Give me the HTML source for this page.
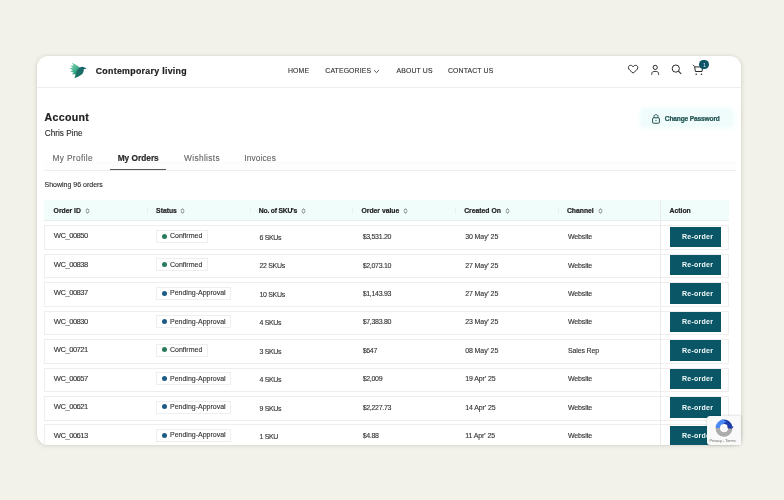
<!DOCTYPE html>
<html><head><meta charset="utf-8">
<style>
*{box-sizing:border-box;margin:0;padding:0}
html,body{width:784px;height:500px;overflow:hidden;background:#F2F2EA;font-family:"Liberation Sans",sans-serif;color:#2b2b2b}
.abs{position:absolute}
#card{will-change:transform;position:absolute;left:37px;top:56px;width:704.2px;height:388.8px;background:#fff;border-radius:11px;box-shadow:0 0 0 0.5px rgba(0,0,0,0.04),0 0.5px 4px 0.5px rgba(0,0,0,0.1);overflow:hidden}
.t{position:absolute;white-space:nowrap;line-height:10px;height:10px;-webkit-text-stroke:0.2px currentColor}
.row{position:absolute;left:44.1px;width:685.3px;height:24.7px;border:1px solid #EEEEEE;background:#fff}
.btn{position:absolute;left:670.1px;width:50.9px;height:20.3px;background:#0A5667}
.badge{position:absolute;left:156.2px;height:13.1px;border:1px solid #EFEFEF;background:#fff}
.dot{position:absolute;width:5px;height:5px;border-radius:50%}
</style></head>
<body>
<div id="card">
<div style="position:absolute;left:-37px;top:-56px;width:784px;height:500px">
<div class="abs" style="left:37px;top:87px;width:705px;height:1px;background:#EEEEEE"></div>
<svg class="abs" style="left:66px;top:58px" width="26" height="24" viewBox="0 0 26 24">
  <defs>
    <linearGradient id="wg" x1="0" y1="0" x2="1" y2="1">
      <stop offset="0" stop-color="#8ad9b9"/>
      <stop offset="0.6" stop-color="#3fae8a"/>
      <stop offset="1" stop-color="#1f7f6c"/>
    </linearGradient>
    <linearGradient id="bg2" x1="1" y1="0" x2="0" y2="1">
      <stop offset="0" stop-color="#1c5f6e"/>
      <stop offset="1" stop-color="#1b7a62"/>
    </linearGradient>
    <filter id="bl" x="-20%" y="-20%" width="140%" height="140%"><feGaussianBlur stdDeviation="0.35"/></filter>
  </defs>
  <g filter="url(#bl)">
  <path d="M5.8 4.6 Q10 6.6 14.8 10.2 L11.2 16.4 L6 16.2 L7.6 14.6 L4.2 13.4 L7 12.1 L3.4 10.4 L6.9 9.6 L4.2 7.8 L7.6 7.4 Z" fill="url(#wg)"/>
  <path d="M12.8 10.2 Q15 8 17.4 9 L20.8 10.4 L17.8 11.2 Q18 15 15 17 Q12.4 18.8 8.4 20.2 L9.6 16.6 Q10 12.4 12.8 10.2 Z" fill="url(#bg2)"/>
  </g>
</svg>
<div class="t" style="left:95.70px;top:65.95px;font-size:8.8px;font-weight:bold;color:#1e1e1e;letter-spacing:0.3px;-webkit-text-stroke:0.2px currentColor;">Contemporary living</div>
<div class="t" style="left:288.00px;top:65.61px;font-size:6.9px;font-weight:normal;color:#333;letter-spacing:0.12px;-webkit-text-stroke:0.12px currentColor;">HOME</div>
<div class="t" style="left:325.30px;top:65.61px;font-size:6.9px;font-weight:normal;color:#333;letter-spacing:0.12px;-webkit-text-stroke:0.12px currentColor;">CATEGORIES</div>
<div class="t" style="left:396.60px;top:65.61px;font-size:6.9px;font-weight:normal;color:#333;letter-spacing:0.12px;-webkit-text-stroke:0.12px currentColor;">ABOUT US</div>
<div class="t" style="left:448.00px;top:65.61px;font-size:6.9px;font-weight:normal;color:#333;letter-spacing:0.12px;-webkit-text-stroke:0.12px currentColor;">CONTACT US</div>
<svg class="abs" style="left:372.5px;top:68.5px" width="7" height="5" viewBox="0 0 7 5"><path d="M1 1.2 L3.5 3.6 L6 1.2" fill="none" stroke="#444" stroke-width="0.9"/></svg>
<svg class="abs" style="left:600px;top:55px" width="120" height="30" viewBox="0 0 120 30">
<path d="M33.1 18.1 C31 16.2 28.4 14.6 28.4 12.6 C28.4 11.1 29.4 10.3 30.6 10.3 C31.8 10.3 32.6 11 33.1 11.9 C33.6 11 34.4 10.3 35.6 10.3 C36.8 10.3 37.8 11.1 37.8 12.6 C37.8 14.6 35.2 16.2 33.1 18.1 Z" fill="none" stroke="#2b2b2b" stroke-width="1" stroke-linejoin="round"/>
<circle cx="55.2" cy="12.4" r="2.1" fill="none" stroke="#2b2b2b" stroke-width="1"/>
<path d="M51.8 19.8 L51.8 18.6 C51.8 17 53 16.4 55.2 16.4 C57.4 16.4 58.6 17 58.6 18.6 L58.6 19.8" fill="none" stroke="#2b2b2b" stroke-width="1"/>
<circle cx="75.8" cy="13.6" r="3.6" fill="none" stroke="#2b2b2b" stroke-width="1"/>
<path d="M78.4 16.2 L81.2 18.8" stroke="#2b2b2b" stroke-width="1.1"/>
<path d="M93 9.8 L94.6 11.4 L95.4 16.5 L102 16.5 M95 11.9 L102.8 11.9 L102 16.5" fill="none" stroke="#2b2b2b" stroke-width="1"/>
<circle cx="96.2" cy="19.3" r="0.8" fill="#2b2b2b"/><circle cx="101.5" cy="19.3" r="0.8" fill="#2b2b2b"/>
</svg>
<div class="abs" style="left:699.4px;top:59.6px;width:9.4px;height:9.8px;border-radius:50%;background:#0E5466"></div>
<div class="t" style="left:703.10px;top:59.89px;font-size:5.5px;font-weight:normal;color:#BFEFEF;letter-spacing:0px;-webkit-text-stroke:0.12px currentColor;-webkit-text-stroke:0">1</div>
<div class="t" style="left:44.60px;top:112.13px;font-size:10.6px;font-weight:bold;color:#1e1e1e;letter-spacing:0.3px;-webkit-text-stroke:0.2px currentColor;">Account</div>
<div class="t" style="left:44.80px;top:129.46px;font-size:8.2px;font-weight:normal;color:#2b2b2b;letter-spacing:0px;-webkit-text-stroke:0.12px currentColor;">Chris Pine</div>
<div class="abs" style="left:642px;top:110px;width:90px;height:15.5px;background:#EFFCFB;box-shadow:0 0 4px 2.5px #F1FDFC;border-radius:2px"></div>
<svg class="abs" style="left:650.5px;top:113px" width="10" height="11" viewBox="0 0 10 11"><rect x="1.6" y="4.8" width="6.8" height="5.4" rx="1" fill="none" stroke="#1d4f4f" stroke-width="1"/><path d="M3 4.8 V3.3 C3 1.1 7 1.1 7 3.3 V4.8" fill="none" stroke="#1d4f4f" stroke-width="1"/><circle cx="5" cy="7.4" r="0.6" fill="#1d4f4f"/></svg>
<div class="t" style="left:664.80px;top:113.51px;font-size:6.6px;font-weight:bold;color:#1d4f4f;letter-spacing:-0.15px;-webkit-text-stroke:0.2px currentColor;">Change Password</div>
<div class="abs" style="left:44px;top:161.5px;width:692px;height:8.5px;background:#FDFDFD;border-top:1px solid #FAFAFA"></div>
<div class="t" style="left:52.50px;top:153.12px;font-size:8.3px;font-weight:normal;color:#666;letter-spacing:0.35px;-webkit-text-stroke:0.12px currentColor;">My Profile</div>
<div class="t" style="left:117.70px;top:153.12px;font-size:8.3px;font-weight:bold;color:#2b2b2b;letter-spacing:0.0px;-webkit-text-stroke:0.2px currentColor;">My Orders</div>
<div class="t" style="left:184.10px;top:153.12px;font-size:8.3px;font-weight:normal;color:#666;letter-spacing:0.35px;-webkit-text-stroke:0.12px currentColor;">Wishlists</div>
<div class="t" style="left:244.30px;top:153.12px;font-size:8.3px;font-weight:normal;color:#666;letter-spacing:0.15px;-webkit-text-stroke:0.12px currentColor;">Invoices</div>
<div class="abs" style="left:44px;top:170px;width:692px;height:1px;background:#EEEEEE"></div>
<div class="abs" style="left:109.6px;top:168.8px;width:56.3px;height:1.3px;background:#555"></div>
<div class="t" style="left:44.50px;top:180.47px;font-size:7px;font-weight:normal;color:#2b2b2b;letter-spacing:0px;-webkit-text-stroke:0.12px currentColor;">Showing 96 orders</div>
<div class="abs" style="left:44.4px;top:200px;width:685.1px;height:20.5px;background:#F0FDFB;border-bottom:1px solid #E6EEEE"></div>
<div class="t" style="left:53.60px;top:205.64px;font-size:6.8px;font-weight:bold;color:#1e1e1e;letter-spacing:0px;-webkit-text-stroke:0.2px currentColor;">Order ID</div>
<svg class="abs" style="left:84.7px;top:208px" width="5" height="6" viewBox="0 0 5 6"><path d="M0.8 2.5 L2.5 1 L4.2 2.5 M0.8 3.5 L2.5 5 L4.2 3.5" fill="none" stroke="#555" stroke-width="0.9"/></svg>
<div class="t" style="left:156.10px;top:205.64px;font-size:6.8px;font-weight:bold;color:#1e1e1e;letter-spacing:0px;-webkit-text-stroke:0.2px currentColor;">Status</div>
<div class="abs" style="left:146.9px;top:207px;width:1px;height:7px;background:#E8F0F0"></div>
<svg class="abs" style="left:179.6px;top:208px" width="5" height="6" viewBox="0 0 5 6"><path d="M0.8 2.5 L2.5 1 L4.2 2.5 M0.8 3.5 L2.5 5 L4.2 3.5" fill="none" stroke="#555" stroke-width="0.9"/></svg>
<div class="t" style="left:258.80px;top:205.64px;font-size:6.8px;font-weight:bold;color:#1e1e1e;letter-spacing:-0.22px;-webkit-text-stroke:0.2px currentColor;">No. of SKU's</div>
<div class="abs" style="left:249.6px;top:207px;width:1px;height:7px;background:#E8F0F0"></div>
<svg class="abs" style="left:301.1px;top:208px" width="5" height="6" viewBox="0 0 5 6"><path d="M0.8 2.5 L2.5 1 L4.2 2.5 M0.8 3.5 L2.5 5 L4.2 3.5" fill="none" stroke="#555" stroke-width="0.9"/></svg>
<div class="t" style="left:361.50px;top:205.64px;font-size:6.8px;font-weight:bold;color:#1e1e1e;letter-spacing:0px;-webkit-text-stroke:0.2px currentColor;">Order value</div>
<div class="abs" style="left:352.3px;top:207px;width:1px;height:7px;background:#E8F0F0"></div>
<svg class="abs" style="left:403.1px;top:208px" width="5" height="6" viewBox="0 0 5 6"><path d="M0.8 2.5 L2.5 1 L4.2 2.5 M0.8 3.5 L2.5 5 L4.2 3.5" fill="none" stroke="#555" stroke-width="0.9"/></svg>
<div class="t" style="left:464.20px;top:205.64px;font-size:6.8px;font-weight:bold;color:#1e1e1e;letter-spacing:0px;-webkit-text-stroke:0.2px currentColor;">Created On</div>
<div class="abs" style="left:455.0px;top:207px;width:1px;height:7px;background:#E8F0F0"></div>
<svg class="abs" style="left:504.9px;top:208px" width="5" height="6" viewBox="0 0 5 6"><path d="M0.8 2.5 L2.5 1 L4.2 2.5 M0.8 3.5 L2.5 5 L4.2 3.5" fill="none" stroke="#555" stroke-width="0.9"/></svg>
<div class="t" style="left:566.90px;top:205.64px;font-size:6.8px;font-weight:bold;color:#1e1e1e;letter-spacing:0px;-webkit-text-stroke:0.2px currentColor;">Channel</div>
<div class="abs" style="left:557.7px;top:207px;width:1px;height:7px;background:#E8F0F0"></div>
<svg class="abs" style="left:597.5px;top:208px" width="5" height="6" viewBox="0 0 5 6"><path d="M0.8 2.5 L2.5 1 L4.2 2.5 M0.8 3.5 L2.5 5 L4.2 3.5" fill="none" stroke="#555" stroke-width="0.9"/></svg>
<div class="t" style="left:669.60px;top:205.64px;font-size:6.8px;font-weight:bold;color:#1e1e1e;letter-spacing:0px;-webkit-text-stroke:0.2px currentColor;">Action</div>
<div class="abs" style="left:660px;top:200px;width:1px;height:260px;background:#EAEAEA;z-index:2"></div>
<div class="row" style="top:225.20px"></div>
<div class="t" style="left:53.80px;top:231.47px;font-size:7.6px;font-weight:normal;color:#333;letter-spacing:-0.5px;-webkit-text-stroke:0.12px currentColor;">WC_00850</div>
<div class="badge" style="top:229.70px;width:52px"></div>
<div class="dot" style="left:161.9px;top:233.60px;background:#2A7A5C"></div>
<div class="t" style="left:170.00px;top:231.17px;font-size:7.0px;font-weight:normal;color:#333;letter-spacing:0px;-webkit-text-stroke:0.12px currentColor;">Confirmed</div>
<div class="t" style="left:259.40px;top:232.87px;font-size:7.0px;font-weight:normal;color:#333;letter-spacing:-0.3px;-webkit-text-stroke:0.12px currentColor;">6 SKUs</div>
<div class="t" style="left:362.70px;top:232.07px;font-size:7.0px;font-weight:normal;color:#333;letter-spacing:-0.3px;-webkit-text-stroke:0.12px currentColor;">$3,531.20</div>
<div class="t" style="left:465.20px;top:232.07px;font-size:7.0px;font-weight:normal;color:#333;letter-spacing:-0.1px;-webkit-text-stroke:0.12px currentColor;">30 May' 25</div>
<div class="t" style="left:568.00px;top:232.07px;font-size:7.0px;font-weight:normal;color:#333;letter-spacing:-0.15px;-webkit-text-stroke:0.12px currentColor;">Website</div>
<div class="btn" style="top:226.50px"></div>
<div class="t" style="left:682.00px;top:231.87px;font-size:7.0px;font-weight:bold;color:#F2FAFA;letter-spacing:0.25px;-webkit-text-stroke:0.2px currentColor;-webkit-text-stroke:0">Re-order</div>
<div class="row" style="top:253.67px"></div>
<div class="t" style="left:53.80px;top:259.94px;font-size:7.6px;font-weight:normal;color:#333;letter-spacing:-0.5px;-webkit-text-stroke:0.12px currentColor;">WC_00838</div>
<div class="badge" style="top:258.17px;width:52px"></div>
<div class="dot" style="left:161.9px;top:262.07px;background:#2A7A5C"></div>
<div class="t" style="left:170.00px;top:259.64px;font-size:7.0px;font-weight:normal;color:#333;letter-spacing:0px;-webkit-text-stroke:0.12px currentColor;">Confirmed</div>
<div class="t" style="left:259.40px;top:261.34px;font-size:7.0px;font-weight:normal;color:#333;letter-spacing:-0.3px;-webkit-text-stroke:0.12px currentColor;">22 SKUs</div>
<div class="t" style="left:362.70px;top:260.54px;font-size:7.0px;font-weight:normal;color:#333;letter-spacing:-0.3px;-webkit-text-stroke:0.12px currentColor;">$2,073.10</div>
<div class="t" style="left:465.20px;top:260.54px;font-size:7.0px;font-weight:normal;color:#333;letter-spacing:-0.1px;-webkit-text-stroke:0.12px currentColor;">27 May' 25</div>
<div class="t" style="left:568.00px;top:260.54px;font-size:7.0px;font-weight:normal;color:#333;letter-spacing:-0.15px;-webkit-text-stroke:0.12px currentColor;">Website</div>
<div class="btn" style="top:254.97px"></div>
<div class="t" style="left:682.00px;top:260.34px;font-size:7.0px;font-weight:bold;color:#F2FAFA;letter-spacing:0.25px;-webkit-text-stroke:0.2px currentColor;-webkit-text-stroke:0">Re-order</div>
<div class="row" style="top:282.14px"></div>
<div class="t" style="left:53.80px;top:288.41px;font-size:7.6px;font-weight:normal;color:#333;letter-spacing:-0.5px;-webkit-text-stroke:0.12px currentColor;">WC_00837</div>
<div class="badge" style="top:286.64px;width:75.2px"></div>
<div class="dot" style="left:161.9px;top:290.54px;background:#1D5B87"></div>
<div class="t" style="left:170.00px;top:288.11px;font-size:7.0px;font-weight:normal;color:#333;letter-spacing:0px;-webkit-text-stroke:0.12px currentColor;">Pending-Approval</div>
<div class="t" style="left:259.40px;top:289.81px;font-size:7.0px;font-weight:normal;color:#333;letter-spacing:-0.3px;-webkit-text-stroke:0.12px currentColor;">10 SKUs</div>
<div class="t" style="left:362.70px;top:289.01px;font-size:7.0px;font-weight:normal;color:#333;letter-spacing:-0.3px;-webkit-text-stroke:0.12px currentColor;">$1,143.93</div>
<div class="t" style="left:465.20px;top:289.01px;font-size:7.0px;font-weight:normal;color:#333;letter-spacing:-0.1px;-webkit-text-stroke:0.12px currentColor;">27 May' 25</div>
<div class="t" style="left:568.00px;top:289.01px;font-size:7.0px;font-weight:normal;color:#333;letter-spacing:-0.15px;-webkit-text-stroke:0.12px currentColor;">Website</div>
<div class="btn" style="top:283.44px"></div>
<div class="t" style="left:682.00px;top:288.81px;font-size:7.0px;font-weight:bold;color:#F2FAFA;letter-spacing:0.25px;-webkit-text-stroke:0.2px currentColor;-webkit-text-stroke:0">Re-order</div>
<div class="row" style="top:310.61px"></div>
<div class="t" style="left:53.80px;top:316.88px;font-size:7.6px;font-weight:normal;color:#333;letter-spacing:-0.5px;-webkit-text-stroke:0.12px currentColor;">WC_00830</div>
<div class="badge" style="top:315.11px;width:75.2px"></div>
<div class="dot" style="left:161.9px;top:319.01px;background:#1D5B87"></div>
<div class="t" style="left:170.00px;top:316.58px;font-size:7.0px;font-weight:normal;color:#333;letter-spacing:0px;-webkit-text-stroke:0.12px currentColor;">Pending-Approval</div>
<div class="t" style="left:259.40px;top:318.28px;font-size:7.0px;font-weight:normal;color:#333;letter-spacing:-0.3px;-webkit-text-stroke:0.12px currentColor;">4 SKUs</div>
<div class="t" style="left:362.70px;top:317.48px;font-size:7.0px;font-weight:normal;color:#333;letter-spacing:-0.3px;-webkit-text-stroke:0.12px currentColor;">$7,383.80</div>
<div class="t" style="left:465.20px;top:317.48px;font-size:7.0px;font-weight:normal;color:#333;letter-spacing:-0.1px;-webkit-text-stroke:0.12px currentColor;">23 May' 25</div>
<div class="t" style="left:568.00px;top:317.48px;font-size:7.0px;font-weight:normal;color:#333;letter-spacing:-0.15px;-webkit-text-stroke:0.12px currentColor;">Website</div>
<div class="btn" style="top:311.91px"></div>
<div class="t" style="left:682.00px;top:317.28px;font-size:7.0px;font-weight:bold;color:#F2FAFA;letter-spacing:0.25px;-webkit-text-stroke:0.2px currentColor;-webkit-text-stroke:0">Re-order</div>
<div class="row" style="top:339.08px"></div>
<div class="t" style="left:53.80px;top:345.35px;font-size:7.6px;font-weight:normal;color:#333;letter-spacing:-0.5px;-webkit-text-stroke:0.12px currentColor;">WC_00721</div>
<div class="badge" style="top:343.58px;width:52px"></div>
<div class="dot" style="left:161.9px;top:347.48px;background:#2A7A5C"></div>
<div class="t" style="left:170.00px;top:345.05px;font-size:7.0px;font-weight:normal;color:#333;letter-spacing:0px;-webkit-text-stroke:0.12px currentColor;">Confirmed</div>
<div class="t" style="left:259.40px;top:346.75px;font-size:7.0px;font-weight:normal;color:#333;letter-spacing:-0.3px;-webkit-text-stroke:0.12px currentColor;">3 SKUs</div>
<div class="t" style="left:362.70px;top:345.95px;font-size:7.0px;font-weight:normal;color:#333;letter-spacing:-0.3px;-webkit-text-stroke:0.12px currentColor;">$647</div>
<div class="t" style="left:465.20px;top:345.95px;font-size:7.0px;font-weight:normal;color:#333;letter-spacing:-0.1px;-webkit-text-stroke:0.12px currentColor;">08 May' 25</div>
<div class="t" style="left:568.00px;top:345.95px;font-size:7.0px;font-weight:normal;color:#333;letter-spacing:-0.15px;-webkit-text-stroke:0.12px currentColor;">Sales Rep</div>
<div class="btn" style="top:340.38px"></div>
<div class="t" style="left:682.00px;top:345.75px;font-size:7.0px;font-weight:bold;color:#F2FAFA;letter-spacing:0.25px;-webkit-text-stroke:0.2px currentColor;-webkit-text-stroke:0">Re-order</div>
<div class="row" style="top:367.55px"></div>
<div class="t" style="left:53.80px;top:373.82px;font-size:7.6px;font-weight:normal;color:#333;letter-spacing:-0.5px;-webkit-text-stroke:0.12px currentColor;">WC_00657</div>
<div class="badge" style="top:372.05px;width:75.2px"></div>
<div class="dot" style="left:161.9px;top:375.95px;background:#1D5B87"></div>
<div class="t" style="left:170.00px;top:373.52px;font-size:7.0px;font-weight:normal;color:#333;letter-spacing:0px;-webkit-text-stroke:0.12px currentColor;">Pending-Approval</div>
<div class="t" style="left:259.40px;top:375.22px;font-size:7.0px;font-weight:normal;color:#333;letter-spacing:-0.3px;-webkit-text-stroke:0.12px currentColor;">4 SKUs</div>
<div class="t" style="left:362.70px;top:374.42px;font-size:7.0px;font-weight:normal;color:#333;letter-spacing:-0.3px;-webkit-text-stroke:0.12px currentColor;">$2,009</div>
<div class="t" style="left:465.20px;top:374.42px;font-size:7.0px;font-weight:normal;color:#333;letter-spacing:-0.1px;-webkit-text-stroke:0.12px currentColor;">19 Apr' 25</div>
<div class="t" style="left:568.00px;top:374.42px;font-size:7.0px;font-weight:normal;color:#333;letter-spacing:-0.15px;-webkit-text-stroke:0.12px currentColor;">Website</div>
<div class="btn" style="top:368.85px"></div>
<div class="t" style="left:682.00px;top:374.22px;font-size:7.0px;font-weight:bold;color:#F2FAFA;letter-spacing:0.25px;-webkit-text-stroke:0.2px currentColor;-webkit-text-stroke:0">Re-order</div>
<div class="row" style="top:396.02px"></div>
<div class="t" style="left:53.80px;top:402.29px;font-size:7.6px;font-weight:normal;color:#333;letter-spacing:-0.5px;-webkit-text-stroke:0.12px currentColor;">WC_00621</div>
<div class="badge" style="top:400.52px;width:75.2px"></div>
<div class="dot" style="left:161.9px;top:404.42px;background:#1D5B87"></div>
<div class="t" style="left:170.00px;top:401.99px;font-size:7.0px;font-weight:normal;color:#333;letter-spacing:0px;-webkit-text-stroke:0.12px currentColor;">Pending-Approval</div>
<div class="t" style="left:259.40px;top:403.69px;font-size:7.0px;font-weight:normal;color:#333;letter-spacing:-0.3px;-webkit-text-stroke:0.12px currentColor;">9 SKUs</div>
<div class="t" style="left:362.70px;top:402.89px;font-size:7.0px;font-weight:normal;color:#333;letter-spacing:-0.3px;-webkit-text-stroke:0.12px currentColor;">$2,227.73</div>
<div class="t" style="left:465.20px;top:402.89px;font-size:7.0px;font-weight:normal;color:#333;letter-spacing:-0.1px;-webkit-text-stroke:0.12px currentColor;">14 Apr' 25</div>
<div class="t" style="left:568.00px;top:402.89px;font-size:7.0px;font-weight:normal;color:#333;letter-spacing:-0.15px;-webkit-text-stroke:0.12px currentColor;">Website</div>
<div class="btn" style="top:397.32px"></div>
<div class="t" style="left:682.00px;top:402.69px;font-size:7.0px;font-weight:bold;color:#F2FAFA;letter-spacing:0.25px;-webkit-text-stroke:0.2px currentColor;-webkit-text-stroke:0">Re-order</div>
<div class="row" style="top:424.49px"></div>
<div class="t" style="left:53.80px;top:430.76px;font-size:7.6px;font-weight:normal;color:#333;letter-spacing:-0.5px;-webkit-text-stroke:0.12px currentColor;">WC_00613</div>
<div class="badge" style="top:428.99px;width:75.2px"></div>
<div class="dot" style="left:161.9px;top:432.89px;background:#1D5B87"></div>
<div class="t" style="left:170.00px;top:430.46px;font-size:7.0px;font-weight:normal;color:#333;letter-spacing:0px;-webkit-text-stroke:0.12px currentColor;">Pending-Approval</div>
<div class="t" style="left:259.40px;top:432.16px;font-size:7.0px;font-weight:normal;color:#333;letter-spacing:-0.3px;-webkit-text-stroke:0.12px currentColor;">1 SKU</div>
<div class="t" style="left:362.70px;top:431.36px;font-size:7.0px;font-weight:normal;color:#333;letter-spacing:-0.3px;-webkit-text-stroke:0.12px currentColor;">$4.88</div>
<div class="t" style="left:465.20px;top:431.36px;font-size:7.0px;font-weight:normal;color:#333;letter-spacing:-0.1px;-webkit-text-stroke:0.12px currentColor;">11 Apr' 25</div>
<div class="t" style="left:568.00px;top:431.36px;font-size:7.0px;font-weight:normal;color:#333;letter-spacing:-0.15px;-webkit-text-stroke:0.12px currentColor;">Website</div>
<div class="btn" style="top:425.79px"></div>
<div class="t" style="left:682.00px;top:431.16px;font-size:7.0px;font-weight:bold;color:#F2FAFA;letter-spacing:0.25px;-webkit-text-stroke:0.2px currentColor;-webkit-text-stroke:0">Re-order</div>
</div>
</div>
<div class="abs" style="left:707px;top:416px;width:34px;height:29px;background:#F9F9F9;box-shadow:0 0 3px rgba(0,0,0,0.22);border-radius:3px 0 0 3px;overflow:hidden;z-index:5">
<svg class="abs" style="left:0;top:0" width="35" height="29" viewBox="0 0 35 29">
<path d="M10.8 12 A6.2 6.2 0 0 1 17 5.8" fill="none" stroke="#4A89F3" stroke-width="4.4"/>
<path d="M17 5.8 A6.2 6.2 0 0 1 23.2 11" fill="none" stroke="#1C3AA9" stroke-width="4.4"/>
<path d="M19.8 10.6 L26.6 10.6 L23.2 15.2 Z" fill="#1C3AA9"/>
<path d="M23.2 12.6 A6.2 6.2 0 0 1 10.8 12" fill="none" stroke="#ABABAB" stroke-width="4.4"/>
<path d="M15 3 L19.5 5.8 L15 8.6 Z" fill="#4A89F3"/>
</svg>
<div class="t" style="left:2.5px;top:20px;font-size:3.8px;color:#666;-webkit-text-stroke:0">Privacy - Terms</div>
</div>
</body></html>
